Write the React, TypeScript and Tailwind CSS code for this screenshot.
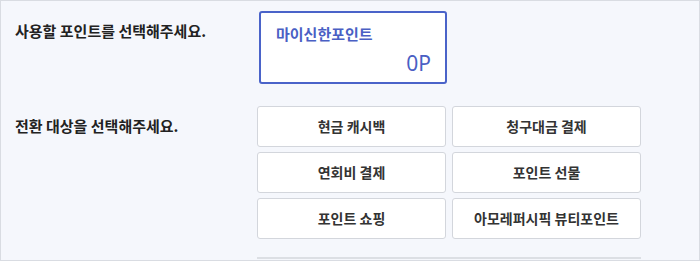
import React from "react";

const font = { fontFamily: '"Noto Sans CJK KR", "Noto Sans", sans-serif' };

const targets = [
  "현금 캐시백",
  "청구대금 결제",
  "연회비 결제",
  "포인트 선물",
  "포인트 쇼핑",
  "아모레퍼시픽 뷰티포인트",
];

export default function App() {
  return (
    <div
      className="w-[700px] h-[261px] overflow-hidden border border-[#d9dce2] bg-[#f5f7fc] pl-[14px] pt-[10px]"
      style={font}
    >
      <div className="flex items-start">
        <div className="w-[244px] mt-[10px] text-[15px] leading-[20px] font-semibold text-[#222222]">
          사용할 포인트를 선택해주세요.
        </div>
        <div className="w-[188px] h-[73px] border-2 border-[#4a63c9] rounded-[3px] bg-white flex flex-col justify-between pl-[15px] pr-[14px] pt-[11px] pb-[7px]">
          <div className="text-[15px] leading-[20px] font-semibold text-[#4a5fc4]">
            마이신한포인트
          </div>
          <div
            className="text-right text-[21px] leading-[24px] text-[#4a5fc4]"
            style={{ fontFamily: '"Noto Sans", Roboto, sans-serif' }}
          >
            0P
          </div>
        </div>
      </div>
      <div className="flex items-start mt-[22px]">
        <div className="w-[242px] mt-[10px] text-[15px] leading-[20px] font-semibold text-[#222222]">
          전환 대상을 선택해주세요.
        </div>
        <div className="w-[384px]">
          <div className="grid grid-cols-2 gap-x-[6px] gap-y-[5px]">
            {targets.map((t) => (
              <div
                key={t}
                className="h-[41px] flex items-center justify-center bg-white border border-[#d3d6dc] rounded-[3px] text-[14px] font-semibold text-[#333333]"
              >
                {t}
              </div>
            ))}
          </div>
          <div className="mt-[18px] h-[41px] border-t-2 border-[#dcdfe4]" />
        </div>
      </div>
    </div>
  );
}
